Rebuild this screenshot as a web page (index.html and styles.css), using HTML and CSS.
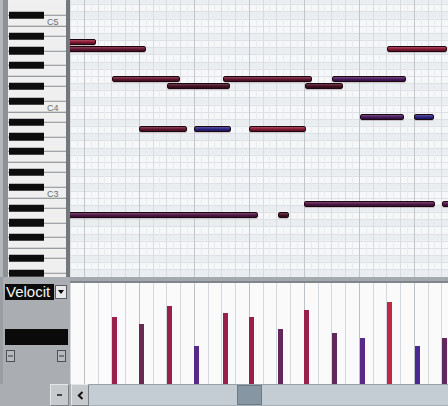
FILE: index.html
```html
<!DOCTYPE html>
<html>
<head>
<meta charset="utf-8">
<link rel="stylesheet" href="styles.css">
</head>
<body>
<div class="app">
  <div class="top">
    <div class="kbd-wrap">
      <div class="keys">
        <div class="oct-label">C5</div>
        <div class="oct-label">C4</div>
        <div class="oct-label">C3</div>
      </div>
    </div>
    <div class="grid">
      <div class="note red" style="left:-4px;top:39px;width:30px"></div>
      <div class="note maroon" style="left:-4px;top:46px;width:80px"></div>
      <div class="note maroon" style="left:42px;top:76px;width:68px"></div>
      <div class="note dark" style="left:97px;top:83px;width:63px"></div>
      <div class="note maroon" style="left:153px;top:76px;width:89px"></div>
      <div class="note dark" style="left:235px;top:83px;width:38px"></div>
      <div class="note purple" style="left:262px;top:76px;width:74px"></div>
      <div class="note red" style="left:317px;top:46px;width:60px"></div>
      <div class="note maroon" style="left:69px;top:126px;width:48px"></div>
      <div class="note blue" style="left:124px;top:126px;width:37px"></div>
      <div class="note red" style="left:179px;top:126px;width:57px"></div>
      <div class="note purple" style="left:290px;top:114px;width:44px"></div>
      <div class="note blue" style="left:344px;top:114px;width:20px"></div>
      <div class="note plum" style="left:-4px;top:212px;width:192px"></div>
      <div class="note dark" style="left:208px;top:212px;width:11px"></div>
      <div class="note plum" style="left:234px;top:201px;width:131px"></div>
      <div class="note plum" style="left:372px;top:201px;width:20px"></div>
    </div>
  </div>
  <div class="mid">
    <div class="ctrl">
      <div class="vsel">
        <div class="vsel-label">Velocit</div>
        <div class="vsel-btn"><span class="tri"></span></div>
      </div>
      <div class="vbox"></div>
      <div class="vbtns">
        <span class="mini"><svg width="7" height="10" viewBox="0 0 7 10"><path d="M1 5H6" stroke="#333" stroke-width="1"/></svg></span>
        <span class="mini"><svg width="7" height="10" viewBox="0 0 7 10"><path d="M1 5H6" stroke="#333" stroke-width="1"/></svg></span>
      </div>
    </div>
    <div class="lane-col">
      <div class="sep"></div>
      <div class="lane">
        <div class="vbar vred" style="left:42px;height:67px"></div>
        <div class="vbar vmaroon" style="left:69px;height:60px"></div>
        <div class="vbar vred" style="left:97px;height:78px"></div>
        <div class="vbar vpurple" style="left:124px;height:38px"></div>
        <div class="vbar vred" style="left:153px;height:71px"></div>
        <div class="vbar vred" style="left:179px;height:67px"></div>
        <div class="vbar vplum" style="left:208px;height:55px"></div>
        <div class="vbar vred" style="left:234px;height:74px"></div>
        <div class="vbar vplum" style="left:262px;height:51px"></div>
        <div class="vbar vpurple" style="left:290px;height:46px"></div>
        <div class="vbar vbright" style="left:317px;height:82px"></div>
        <div class="vbar vblue" style="left:345px;height:38px"></div>
        <div class="vbar vplum" style="left:372px;height:46px"></div>
      </div>
    </div>
  </div>
  <div class="scroll">
    <div class="scroll-pad"></div>
    <div class="sbtn minus"><svg width="7" height="4" viewBox="0 0 7 4"><path d="M1 2H6" stroke="#222" stroke-width="1.6"/></svg></div>
    <div class="sbtn left"><svg width="7" height="9" viewBox="0 0 7 9"><path d="M5.5 1L1.8 4.5L5.5 8" fill="none" stroke="#111" stroke-width="2"/></svg></div>
    <div class="track"><div class="thumb"></div></div>
  </div>
</div>
</body>
</html>
```

FILE: styles.css
```css
* { box-sizing: border-box; margin: 0; padding: 0; }
html, body {
  width: 448px;
  height: 406px;
  overflow: hidden;
  background: #aaaeb2;
  font-family: "Liberation Sans", Arial, sans-serif;
}
.app {
  display: flex;
  flex-direction: column;
  width: 448px;
  height: 406px;
}
.top { display: flex; height: 277px; }

.kbd-wrap {
  width: 70px;
  padding-left: 3px;
  background: #b4b8bc;
  display: flex;
}
.keys {
  flex: 1;
  border-left: 5px solid #8d9195;
  border-right: 4px solid #74787c;
  padding-top: 18px;
  padding-left: 39px;
  background:
    linear-gradient(#f0f0f0, #f0f0f0) 0 0 / 100% 4px no-repeat,
    linear-gradient(to bottom,
      transparent 0 7.17px, #0d0d0d 7.17px 14.33px,
      transparent 14.33px 21.5px, #0d0d0d 21.5px 28.67px,
      transparent 28.67px 35.83px, #0d0d0d 35.83px 43px,
      transparent 43px 57.33px, #0d0d0d 57.33px 64.5px,
      transparent 64.5px 71.67px, #0d0d0d 71.67px 78.83px,
      transparent 78.83px) 1px 25.75px / 35px 86px repeat-y,
    linear-gradient(to bottom,
      #7e8184 0 1px, transparent 1px 10.3px,
      #8a8d90 10.3px 11.3px, transparent 11.3px 24.6px,
      #8a8d90 24.6px 25.6px, transparent 25.6px 39px,
      #8a8d90 39px 40px, transparent 40px 49.7px,
      #7e8184 49.7px 50.7px, transparent 50.7px 60.4px,
      #8a8d90 60.4px 61.4px, transparent 61.4px 74.8px,
      #8a8d90 74.8px 75.8px, transparent 75.8px) 0 25.75px / 100% 86px repeat-y,
    #efefef;
}
.oct-label {
  height: 86px;
  font-size: 9px;
  line-height: 8px;
  color: #6a6e72;
}

.grid {
  flex: 1;
  position: relative;
  overflow: hidden;
  background:
    repeating-linear-gradient(to right, transparent 0 13.75px, #c0c6cc 13.75px 14.75px, transparent 14.75px 55px),
    repeating-linear-gradient(to right, #d9dde1 0 1px, transparent 1px 13.75px),
    repeating-linear-gradient(to right, transparent 0 6.875px, #e9ecee 6.875px 7.875px, transparent 7.875px 13.75px),
    repeating-linear-gradient(to bottom, #dde1e5 -2.9167px, #dde1e5 -1.9167px, transparent -1.9167px, transparent 4.25px),
    linear-gradient(to bottom,
      transparent 0 7.17px, #ebeef0 7.17px 14.33px,
      transparent 14.33px 21.5px, #ebeef0 21.5px 28.67px,
      transparent 28.67px 35.83px, #ebeef0 35.83px 43px,
      transparent 43px 57.33px, #ebeef0 57.33px 64.5px,
      transparent 64.5px 71.67px, #ebeef0 71.67px 78.83px,
      transparent 78.83px) 0 25.75px / 100% 86px repeat-y,
    #f6f7f8;
}
.note {
  position: absolute;
  height: 6px;
  border-radius: 2px;
  border: 1px solid #1c0810;
  box-shadow: 0 1px 0 rgba(60, 20, 30, 0.2);
}
.note.red { background: linear-gradient(#b04860, #801830 55%, #5e0e24); }
.note.maroon { background: linear-gradient(#904256, #601630 55%, #440c20); }
.note.dark { background: linear-gradient(#703a48, #421222 55%, #300a16); }
.note.purple { background: linear-gradient(#744886, #441a56 55%, #321044); }
.note.blue { background: linear-gradient(#5a52a8, #2a2278 55%, #1c1664); }
.note.plum { background: linear-gradient(#804470, #4c1844 55%, #380e32); }

.mid { display: flex; height: 107px; }
.ctrl {
  width: 70px;
  background: #aaaeb2;
  border-left: 3px solid #9a9ea2;
  padding: 7px 0 0 2px;
  display: flex;
  flex-direction: column;
}
.vsel { display: flex; align-items: center; gap: 1px; height: 16px; }
.vsel-label {
  width: 49px;
  height: 16px;
  background: #0c0c0c;
  color: #f4f4f4;
  font-size: 15px;
  line-height: 16px;
  padding-left: 1px;
  white-space: nowrap;
}
.vsel-btn {
  width: 12px;
  height: 14px;
  background: #e8e8e8;
  border: 1px solid #5a5e62;
  display: flex;
  align-items: center;
  justify-content: center;
}
.tri {
  width: 0;
  height: 0;
  border-left: 3.5px solid transparent;
  border-right: 3.5px solid transparent;
  border-top: 4px solid #000;
}
.vbox {
  margin-top: 29px;
  width: 63px;
  height: 16px;
  background: #0a0a0a;
}
.vbtns {
  margin-top: 5px;
  width: 61px;
  padding-left: 1px;
  display: flex;
  justify-content: space-between;
}
.mini {
  width: 9px;
  height: 12px;
  border: 1px solid #4c5054;
  background: #b6babe;
  display: flex;
  align-items: center;
  justify-content: center;
}

.lane-col { flex: 1; display: flex; flex-direction: column; }
.sep {
  height: 6px;
  background: #a4a9ae;
  border-bottom: 2px solid #80868c;
}
.lane {
  flex: 1;
  position: relative;
  overflow: hidden;
  background:
    repeating-linear-gradient(to right, transparent 0 13.75px, #bcc1c6 13.75px 14.75px, transparent 14.75px 55px),
    repeating-linear-gradient(to right, #d4d8dc 0 1px, transparent 1px 13.75px),
    #fafafa;
}
.vbar { position: absolute; bottom: 0; width: 5px; }
.vred { background: #98204a; }
.vmaroon { background: #6a2a50; }
.vpurple { background: #582a88; }
.vplum { background: #60285c; }
.vbright { background: #bc2a44; }
.vblue { background: #482a92; }

.scroll { height: 22px; display: flex; background: #aaaeb2; }
.scroll-pad { width: 50px; }
.sbtn {
  width: 19px;
  height: 22px;
  background: #c6cacd;
  border: 1px solid;
  border-color: #e4e6e8 #7c8084 #7c8084 #e4e6e8;
  display: flex;
  align-items: center;
  justify-content: center;
}
.sbtn.left { margin-left: 2px; width: 18px; }
.track {
  flex: 1;
  display: flex;
  padding-left: 148px;
  background: #c4ccd4;
  border-top: 1px solid #98a0a8;
  border-bottom: 1px solid #a8b0b8;
}
.thumb {
  width: 25px;
  background: #8796a3;
  border: 1px solid #6c7b88;
}
```
